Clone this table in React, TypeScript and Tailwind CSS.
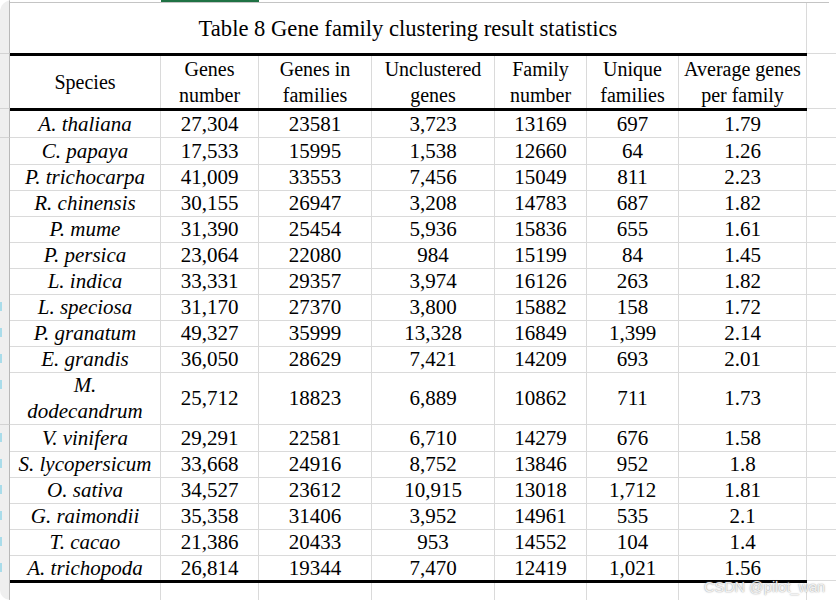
import React from "react";

// column lines at x = 9 | 160 | 258 | 371 | 494 | 586 | 678 | 806
const GRID = "grid grid-cols-[10px_151px_98px_113px_123px_92px_92px_128px_1fr]";

const HEADERS: string[][] = [
  ["Species"],
  ["Genes", "number"],
  ["Genes in", "families"],
  ["Unclustered", "genes"],
  ["Family", "number"],
  ["Unique", "families"],
  ["Average genes", "per family"],
];

const ROWS: string[][] = [
  ["A. thaliana", "27,304", "23581", "3,723", "13169", "697", "1.79"],
  ["C. papaya", "17,533", "15995", "1,538", "12660", "64", "1.26"],
  ["P. trichocarpa", "41,009", "33553", "7,456", "15049", "811", "2.23"],
  ["R. chinensis", "30,155", "26947", "3,208", "14783", "687", "1.82"],
  ["P. mume", "31,390", "25454", "5,936", "15836", "655", "1.61"],
  ["P. persica", "23,064", "22080", "984", "15199", "84", "1.45"],
  ["L. indica", "33,331", "29357", "3,974", "16126", "263", "1.82"],
  ["L. speciosa", "31,170", "27370", "3,800", "15882", "158", "1.72"],
  ["P. granatum", "49,327", "35999", "13,328", "16849", "1,399", "2.14"],
  ["E. grandis", "36,050", "28629", "7,421", "14209", "693", "2.01"],
  ["M.|dodecandrum", "25,712", "18823", "6,889", "10862", "711", "1.73"],
  ["V. vinifera", "29,291", "22581", "6,710", "14279", "676", "1.58"],
  ["S. lycopersicum", "33,668", "24916", "8,752", "13846", "952", "1.8"],
  ["O. sativa", "34,527", "23612", "10,915", "13018", "1,712", "1.81"],
  ["G. raimondii", "35,358", "31406", "3,952", "14961", "535", "2.1"],
  ["T. cacao", "21,386", "20433", "953", "14552", "104", "1.4"],
  ["A. trichopoda", "26,814", "19344", "7,470", "12419", "1,021", "1.56"],
];

function Strip({ bottom = true, mark = false }: { bottom?: boolean; mark?: boolean }) {
  return (
    <div
      className={`relative bg-[#efefef] border-r border-r-[#b9b9b9] ${bottom ? "border-b border-b-[#d3d3d3]" : ""}`}
    >
      {mark && <div className="absolute left-0 top-[8px] w-[2px] h-[9px] bg-[#a9dcea]" />}
    </div>
  );
}

function Thick() {
  return (
    <div className={`${GRID} h-[3px] shrink-0`}>
      <div className="bg-[#efefef] border-r border-r-[#b9b9b9] border-t border-t-[#d3d3d3]" />
      <div className="col-span-7 bg-black" />
      <div className="border-t border-[#dadada]" />
    </div>
  );
}

export default function App() {
  return (
    <div className="relative w-[836px] h-[600px] overflow-hidden rounded-tl-[12px] rounded-bl-[10px] bg-white flex flex-col font-['Liberation_Serif','Times_New_Roman',serif] text-black">
      {/* column header edge, selected column in green */}
      <div className={`${GRID} h-[3px] shrink-0`}>
        <div className="bg-[#efefef] border-r border-r-[#b9b9b9]" />
        <div className="border-b border-[#c4c4c4]" />
        <div className="border-b border-[#c4c4c4] relative">
          <div className="absolute left-0 right-0 top-0 h-[2px] bg-[#1f7244]" />
        </div>
        <div className="border-b border-[#c4c4c4]" />
        <div className="border-b border-[#c4c4c4]" />
        <div className="border-b border-[#c4c4c4]" />
        <div className="border-b border-[#c4c4c4]" />
        <div className="border-b border-[#c4c4c4]" />
        <div>
          <div className="w-[22px] h-full border-b border-[#c4c4c4]" />
        </div>
      </div>

      {/* title */}
      <div className={`${GRID} h-[50px] shrink-0`}>
        <Strip bottom={false} />
        <div className="col-span-7 flex items-center justify-center border-r border-[#dadada] text-[22.6px] pt-[1px]">
          Table 8 Gene family clustering result statistics
        </div>
        <div />
      </div>
      <Thick />

      {/* header */}
      <div className={`${GRID} h-[52px] shrink-0`}>
        <Strip bottom={false} />
        {HEADERS.map((h, i) => (
          <div
            key={i}
            className="flex flex-col items-center justify-center border-r border-[#dadada] text-[20px] leading-[26px] text-center"
          >
            {h.map((line) => (
              <span key={line} className="whitespace-nowrap">
                {line}
              </span>
            ))}
          </div>
        ))}
        <div />
      </div>
      <Thick />

      {ROWS.map((row, r) => {
        const last = r === ROWS.length - 1;
        const tall = row[0].includes("|");
        const h = r === 0 ? "h-[27px]" : tall ? "h-[53px]" : last ? "h-[25px]" : "h-[26px]";
        const bb = last ? "" : "border-b";
        return (
          <div key={r} className={`${GRID} ${h} shrink-0`}>
            <Strip bottom={!last} mark={r >= 7} />
            {row.map((v, c) => (
              <div
                key={c}
                className={`flex flex-col items-center justify-center border-r ${bb} border-[#dadada] text-[21px] leading-[26px] whitespace-nowrap ${c === 0 ? "italic" : ""}`}
              >
                {v.split("|").map((p) => (
                  <span key={p}>{p}</span>
                ))}
              </div>
            ))}
            <div className={`${bb} border-[#dadada]`} />
          </div>
        );
      })}
      <Thick />

      {/* empty row below the table */}
      <div className={`${GRID} flex-1`}>
        <Strip bottom={false} />
        <div className="border-r border-[#dadada]" />
        <div className="border-r border-[#dadada]" />
        <div className="border-r border-[#dadada]" />
        <div className="border-r border-[#dadada]" />
        <div className="border-r border-[#dadada]" />
        <div className="border-r border-[#dadada]" />
        <div className="border-r border-[#dadada]" />
        <div />
      </div>

      <div className="absolute left-[704px] top-[579px] text-[14.5px] leading-[16px] font-['Liberation_Sans',Arial,sans-serif] text-[#ffffffdd] [text-shadow:0_0_1.5px_#7a7a7a]">
        CSDN @pilot_wan
      </div>
    </div>
  );
}
